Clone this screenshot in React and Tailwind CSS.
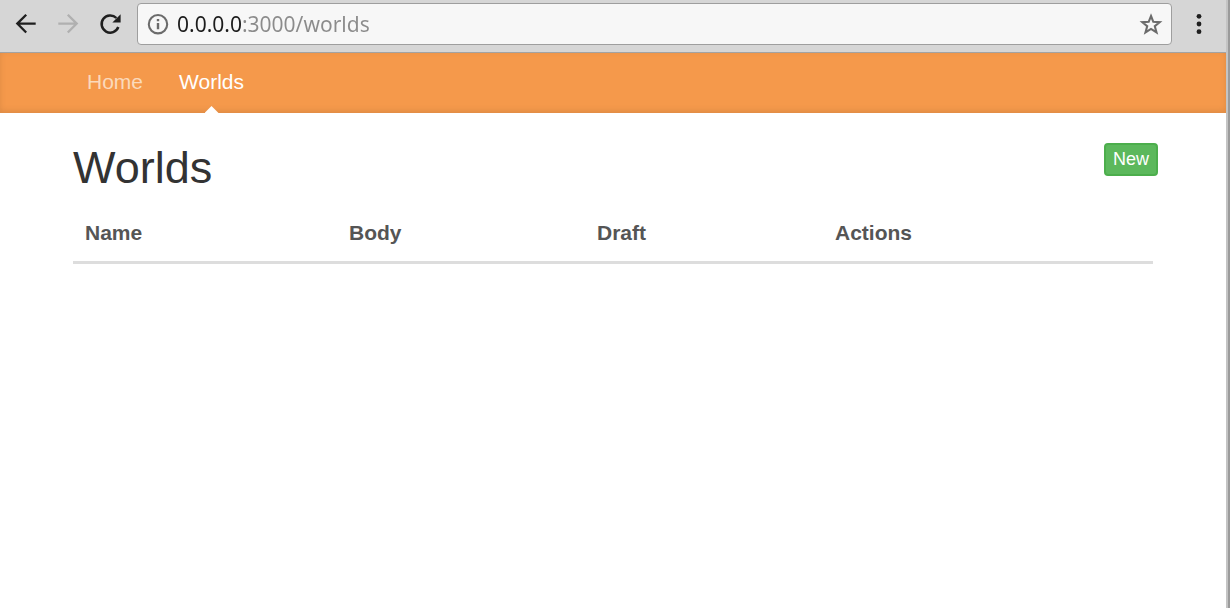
import React from "react";

function Toolbar() {
  return (
    <header className="flex h-[53px] items-start border-b border-[#a3a3a3] bg-[#d6d6d6] pt-[3px]">
      <div className="flex h-[42px] items-center gap-[14px] pl-3">
        <button type="button" aria-label="Back" className="size-7 text-[#1f1f1f]">
          <svg viewBox="0 0 28 28" className="size-7" fill="none" stroke="currentColor" strokeWidth="2.3">
            <path d="M23.7 13.6H5.5M14.2 4.7L5.3 13.6L14.2 22.5" />
          </svg>
        </button>
        <button type="button" aria-label="Forward" disabled className="size-7 text-[#b0b0b0]">
          <svg viewBox="0 0 28 28" className="size-7" fill="none" stroke="currentColor" strokeWidth="2.3">
            <path d="M4.3 13.6H22.5M13.8 4.7L22.7 13.6L13.8 22.5" />
          </svg>
        </button>
        <button type="button" aria-label="Reload" className="size-7 text-[#1f1f1f]">
          <svg viewBox="0 0 28 28" className="size-7" fill="none">
            <path d="M22.3 17A8.6 8.6 0 1 1 20.4 8" stroke="currentColor" strokeWidth="2.5" />
            <path d="M24.6 4.2V12.4H16.4Z" fill="currentColor" />
          </svg>
        </button>
      </div>
      <label className="ml-[13px] flex h-[42px] flex-1 items-center rounded-[4px] border border-[#9e9e9e] bg-[#f7f7f7] pr-2 pl-[9px]">
        <svg viewBox="0 0 22 22" className="size-[22px] shrink-0" aria-hidden="true">
          <circle cx="11" cy="11.2" r="9.2" fill="none" stroke="#6b6b6b" strokeWidth="2.1" />
          <path d="M9.8 10H12.2V16.2H9.8ZM9.8 6H12.2V8.3H9.8Z" fill="#6b6b6b" />
        </svg>
        <input
          type="text"
          aria-label="Address"
          defaultValue="0.0.0.0:3000/worlds"
          className="ml-2 min-w-0 flex-1 bg-[linear-gradient(90deg,#1c1c1c_65px,#8b8b8b_65px)] bg-clip-text font-['Noto_Sans',sans-serif] text-[21px] leading-[28px] text-transparent caret-black outline-none"
        />
        <button type="button" aria-label="Bookmark" className="size-6">
          <svg viewBox="0 0 24 24" className="size-6" fill="none" stroke="#6b6b6b" strokeWidth="2.1">
            <path d="M12 4L14.3 9.8L20.7 10.2L15.8 14.2L17.5 20.4L12 16.9L6.5 20.4L8.2 14.2L3.3 10.2L9.7 9.8Z" />
          </svg>
        </button>
      </label>
      <button type="button" aria-label="Menu" className="mx-[13px] flex h-[42px] w-7 items-center justify-center">
        <svg viewBox="0 0 28 28" className="size-7" fill="#1f1f1f">
          <circle cx="14" cy="6.3" r="2.4" />
          <circle cx="14" cy="14" r="2.4" />
          <circle cx="14" cy="21.7" r="2.4" />
        </svg>
      </button>
    </header>
  );
}

function SiteNav() {
  return (
    <nav className="flex h-[60px] gap-9 bg-[#f5994b] px-[87px] text-[21px] leading-[58px] shadow-[inset_0_-2px_6px_rgba(0,0,0,0.1)]">
      <a href="#home" className="text-[#fbdabb]">Home</a>
      <a href="#worlds" aria-current="page" className="relative text-white">
        Worlds
        <span className="absolute bottom-0 left-1/2 h-[7px] w-[14px] -translate-x-1/2 bg-white [clip-path:polygon(50%_0,100%_100%,0_100%)]" />
      </a>
    </nav>
  );
}

const columns = [
  { label: "Name", width: "w-[264px]" },
  { label: "Body", width: "w-[248px]" },
  { label: "Draft", width: "w-[238px]" },
  { label: "Actions", width: "" },
];

export default function App() {
  return (
    <div className="flex min-h-screen bg-white font-['Liberation_Sans',Arial,sans-serif]">
      <div className="min-w-0 flex-1">
        <Toolbar />
        <SiteNav />
        <main className="px-[73px] pt-[30px]">
          <div className="-mr-[5px] flex items-start justify-between">
            <h1 className="text-[45px] leading-[50px] text-[#333]">Worlds</h1>
            <button type="button" className="h-[33px] rounded-[4px] border-2 border-[#4cae4c] bg-[#5cb85c] px-[7px] pb-[2px] text-[18px] leading-[26px] text-white">
              New
            </button>
          </div>
          <table className="mt-[15px] w-full table-fixed border-collapse text-left text-[21px] leading-[30px] text-[#555]">
            <thead>
              <tr className="border-b-[3px] border-[#ddd]">
                {columns.map((c) => (
                  <th key={c.label} scope="col" className={`${c.width} pt-[10px] pb-[13px] pl-3 font-bold`}>
                    {c.label}
                  </th>
                ))}
              </tr>
            </thead>
            <tbody />
          </table>
        </main>
      </div>
      <div className="w-1 shrink-0 border-l-2 border-[#c4c4c4] bg-[#9b9b9b]" />
    </div>
  );
}
